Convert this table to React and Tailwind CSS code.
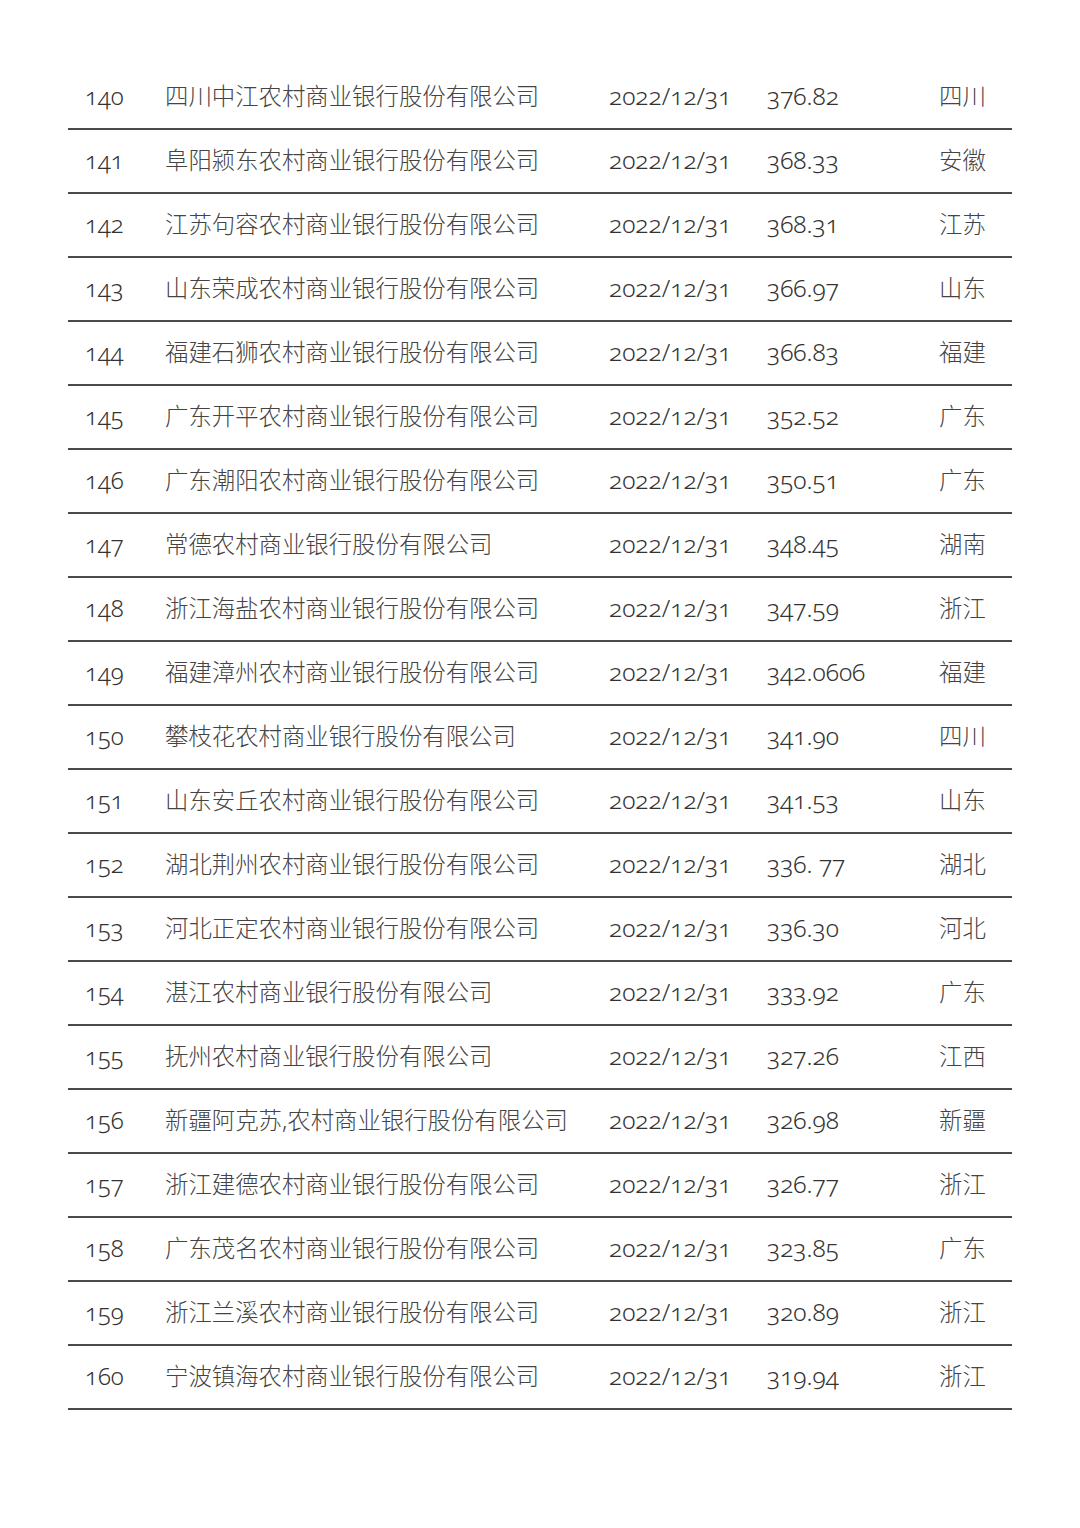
import React from "react";

const rows = [
  ["140", "四川中江农村商业银行股份有限公司", "376.82", "四川"],
  ["141", "阜阳颍东农村商业银行股份有限公司", "368.33", "安徽"],
  ["142", "江苏句容农村商业银行股份有限公司", "368.31", "江苏"],
  ["143", "山东荣成农村商业银行股份有限公司", "366.97", "山东"],
  ["144", "福建石狮农村商业银行股份有限公司", "366.83", "福建"],
  ["145", "广东开平农村商业银行股份有限公司", "352.52", "广东"],
  ["146", "广东潮阳农村商业银行股份有限公司", "350.51", "广东"],
  ["147", "常德农村商业银行股份有限公司", "348.45", "湖南"],
  ["148", "浙江海盐农村商业银行股份有限公司", "347.59", "浙江"],
  ["149", "福建漳州农村商业银行股份有限公司", "342.0606", "福建"],
  ["150", "攀枝花农村商业银行股份有限公司", "341.90", "四川"],
  ["151", "山东安丘农村商业银行股份有限公司", "341.53", "山东"],
  ["152", "湖北荆州农村商业银行股份有限公司", "336. 77", "湖北"],
  ["153", "河北正定农村商业银行股份有限公司", "336.30", "河北"],
  ["154", "湛江农村商业银行股份有限公司", "333.92", "广东"],
  ["155", "抚州农村商业银行股份有限公司", "327.26", "江西"],
  ["156", "新疆阿克苏,农村商业银行股份有限公司", "326.98", "新疆"],
  ["157", "浙江建德农村商业银行股份有限公司", "326.77", "浙江"],
  ["158", "广东茂名农村商业银行股份有限公司", "323.85", "广东"],
  ["159", "浙江兰溪农村商业银行股份有限公司", "320.89", "浙江"],
  ["160", "宁波镇海农村商业银行股份有限公司", "319.94", "浙江"],
];

export default function App() {
  return (
    <div
      className="w-[1080px] h-[1528px] bg-white pt-[66px] text-[#333333]"
      style={{ fontFamily: '"Noto Sans", "Noto Sans CJK SC", sans-serif' }}
    >
      <div className="ml-[68px] w-[944px]">
        {rows.map((r) => (
          <div
            key={r[0]}
            className="grid grid-cols-[97px_444px_158px_172px_1fr] items-center h-[64px] border-b-2 border-[#4a4a4a] leading-none oldstyle-nums"
          >
            <div className="pl-[17px] text-[24px] font-light -mt-[2px]">{r[0]}</div>
            <div className="whitespace-nowrap text-[23.4px] font-light text-[#444444]">{r[1]}</div>
            <div className="text-[24.5px] font-light -mt-[2px]">2022/12/31</div>
            <div className="text-[24.5px] font-light -mt-[2px]">{r[2]}</div>
            <div className="text-[23.4px] font-light text-[#444444]">{r[3]}</div>
          </div>
        ))}
      </div>
    </div>
  );
}
